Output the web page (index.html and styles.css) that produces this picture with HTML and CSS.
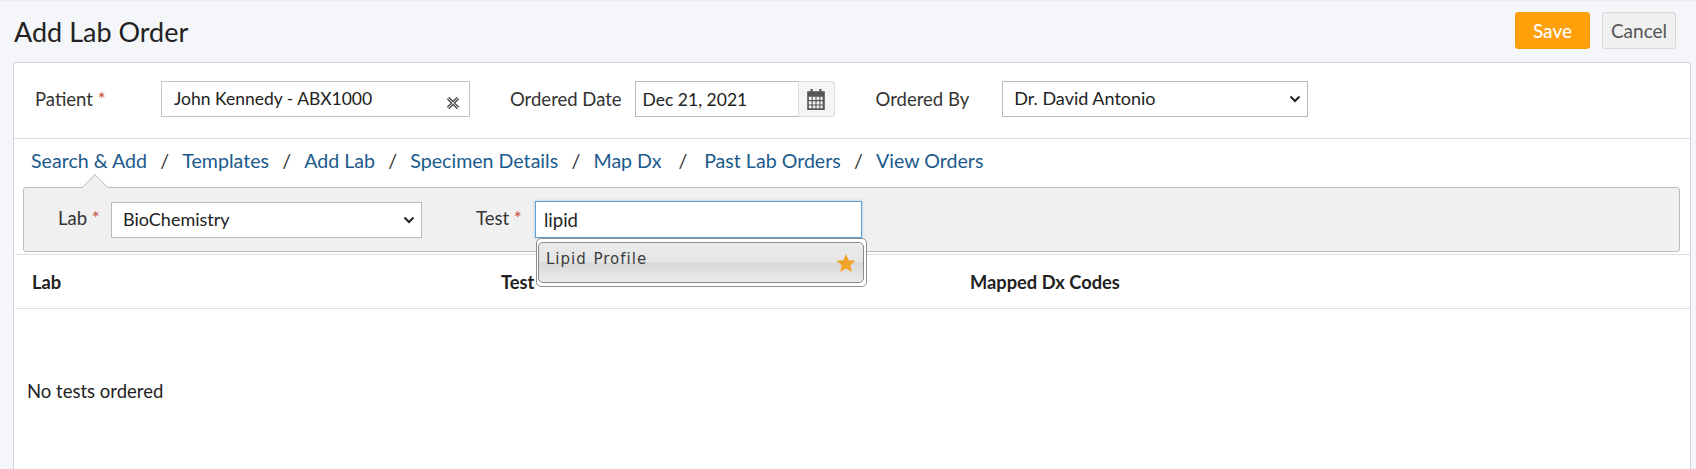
FILE: index.html
```html
<!DOCTYPE html>
<html lang="en">
<head>
<meta charset="utf-8">
<title>Add Lab Order</title>
<link rel="stylesheet" href="styles.css">
</head>
<body>
<header class="page-head">
  <h1 class="page-title">Add Lab Order</h1>
  <div class="actions">
    <button class="btn btn-save">Save</button>
    <button class="btn btn-cancel">Cancel</button>
  </div>
</header>
<main class="card">
  <section class="order-row">
    <label class="lbl lbl-patient">Patient <span class="req">*</span></label>
    <div class="patient-box">
      <span>John Kennedy - ABX1000</span>
      <svg class="clear-icon" viewBox="0 0 14 14" width="14" height="14"><path d="M2 2l10 10M12 2L2 12" stroke="#555" stroke-width="3.4" fill="none"/><path d="M2 2l10 10M12 2L2 12" stroke="#ddd" stroke-width="1" fill="none"/></svg>
    </div>
    <label class="lbl lbl-date">Ordered Date</label>
    <div class="date-group">
      <input class="date-input" value="Dec 21, 2021">
      <span class="date-btn">
        <svg viewBox="0 0 18 20" width="20" height="22"><path fill="#555" fill-rule="evenodd" d="M1 3h3V1h2v2h6V1h2v2h3v17H1zM2.500 8v3h2.500V8zm3.500 0v3h2.500V8zm3.500 0v3H12V8zm3.500 0v3h2V8zM2.500 12v3h2.500v-3zm3.500 0v3h2.500v-3zm3.500 0v3H12v-3zm3.500 0v3h2v-3zM2.500 16v2.500h2.500V16zm3.500 0v2.500h2.500V16zm3.500 0v2.500H12V16zm3.500 0v2.500h2V16z"/></svg>
      </span>
    </div>
    <label class="lbl lbl-by">Ordered By</label>
    <select class="field select-by"><option>Dr. David Antonio</option></select>
  </section>
  <nav class="tabs">
    <a class="tab">Search &amp; Add</a><span class="sep">/</span>
    <a class="tab">Templates</a><span class="sep">/</span>
    <a class="tab">Add Lab</a><span class="sep">/</span>
    <a class="tab">Specimen Details</a><span class="sep">/</span>
    <a class="tab">Map Dx</a><span class="sep sep-wide">/</span>
    <a class="tab">Past Lab Orders</a><span class="sep">/</span>
    <a class="tab">View Orders</a>
  </nav>
  <section class="search-panel">
    <span class="notch"></span>
    <label class="lbl lbl-lab">Lab <span class="req">*</span></label>
    <select class="field select-lab"><option>BioChemistry</option></select>
    <label class="lbl lbl-test">Test <span class="req">*</span></label>
    <div class="test-wrap">
      <input class="test-input" value="lipid">
      <div class="suggest">
        <div class="suggest-item">
          <span class="suggest-text">Lipid Profile</span>
          <svg class="star" viewBox="0 0 20 20" width="20" height="20"><path fill="#f0a52a" d="M10 1l2.700 6.200 6.800.6-5.100 4.500 1.500 6.600L10 15.400l-5.900 3.500 1.500-6.600L.5 7.800l6.800-.6z"/></svg>
        </div>
      </div>
    </div>
  </section>
  <section class="table-head">
    <div class="col col-lab">Lab</div>
    <div class="col col-test">Test</div>
    <div class="col">Mapped Dx Codes</div>
  </section>
  <p class="empty">No tests ordered</p>
</main>
</body>
</html>
```
FILE: styles.css
```css
* { box-sizing: border-box; }
html, body { height: 100%; }
body {
  margin: 0;
  height: 469px;
  overflow: hidden;
  background: #f4f6f9;
  border-top: 1px solid #eceef1;
  font-family: Lato, "Liberation Sans", sans-serif;
  font-size: 18.5px;
  color: #222;
}
.page-head {
  display: flex;
  justify-content: space-between;
  align-items: flex-start;
  height: 61px;
  padding: 11px 20px 0 14px;
}
.page-title {
  margin: 0;
  padding-top: 2px;
  font-size: 27px;
  line-height: 36px;
  font-weight: 400;
  color: #222;
}
.actions { display: flex; gap: 12px; }
.btn {
  height: 37px;
  border-radius: 3px;
  font-family: inherit;
  font-size: 19px;
  padding: 0;
}
.btn-save {
  width: 75px;
  background: #ff9f0a;
  border: 1px solid #f59a08;
  color: #fff;
  font-weight: 500;
}
.btn-cancel {
  width: 74px;
  background: #f0f0f0;
  border: 1px solid #d8d8d8;
  color: #555;
}
.card {
  margin: 0 5px 0 13px;
  height: 430px;
  background: #fff;
  border: 1px solid #cfd2d6;
  border-radius: 3px 3px 0 0;
}
.order-row {
  display: flex;
  align-items: center;
  height: 76px;
  padding-bottom: 3px;
  border-bottom: 1px solid #dcdfe2;
}
.lbl { color: #333; white-space: nowrap; }
.req { color: #c8523c; }
.lbl-patient { margin-left: 21px; width: 126px; }
.patient-box {
  position: relative;
  display: flex;
  align-items: center;
  width: 309px;
  height: 36px;
  padding: 0 0 2px 12px;
  border: 1px solid #c4c4c4;
  color: #222;
  font-size: 17.5px;
}
.clear-icon { position: absolute; right: 9px; top: 14px; }
.lbl-date { margin-left: 40px; }
.date-group { display: flex; margin-left: 13px; }
.date-input {
  width: 164px;
  height: 36px;
  padding: 0 7px;
  border: 1px solid #b9b9b9;
  font: inherit;
  font-size: 17.5px;
  color: #222;
  outline: 0;
}
.date-btn {
  display: flex;
  align-items: center;
  justify-content: center;
  width: 37px;
  height: 36px;
  margin-left: -1px;
  background: #f5f5f5;
  border: 1px solid #dcdcdc;
  border-radius: 0 3px 3px 0;
}
.lbl-by { margin-left: 41px; }
.field {
  appearance: none;
  height: 36px;
  border: 1px solid #b9b9b9;
  background: #fff url("data:image/svg+xml,%3Csvg xmlns='http://www.w3.org/2000/svg' width='12' height='8' viewBox='0 0 12 8'%3E%3Cpath d='M1.500 1.500 6 6l4.500-4.500' fill='none' stroke='%23222' stroke-width='2'/%3E%3C/svg%3E") no-repeat right 6px center;
  font: inherit;
  font-size: 18px;
  color: #222;
  padding: 0 0 2px 11px;
  border-radius: 0;
}
.select-by { width: 306px; margin-left: 33px; }
.tabs {
  display: flex;
  align-items: center;
  height: 48px;
  padding: 0 0 5px 17px;
  font-size: 19.6px;
}
.tab { color: #1b5a8c; white-space: nowrap; }
.sep { width: 35.3px; text-align: center; color: #333; }
.sep-wide { width: 42.7px; }
.search-panel {
  position: relative;
  display: flex;
  align-items: center;
  height: 65px;
  margin: 0 10px 0 9px;
  background: #f0f0f0;
  border: 1px solid #bcbcbc;
  border-radius: 3px;
}
.notch {
  position: absolute;
  left: 61px;
  top: -10px;
  width: 20px;
  height: 20px;
  background: #f0f0f0;
  border-left: 1px solid #bcbcbc;
  border-top: 1px solid #bcbcbc;
  transform: rotate(45deg);
  clip-path: polygon(0 0, 100% 0, 0 100%);
}
.lbl-lab { margin-left: 34px; width: 53px; margin-top: -3px; }
.select-lab { width: 311px; }
.lbl-test { margin-left: 54px; width: 59px; margin-top: -3px; }
.test-wrap { position: relative; }
.test-input {
  display: block;
  width: 327px;
  height: 37px;
  padding: 0 8px;
  border: 1px solid #5f9ed1;
  box-shadow: 0 0 3px rgba(95, 158, 209, .5);
  background: #fff;
  font: inherit;
  color: #222;
  outline: 0;
}
.suggest {
  position: absolute;
  left: 1px;
  top: 37px;
  width: 331px;
  height: 49px;
  padding: 3px 2px 3px 1px;
  background: #fff;
  border: 1px solid #8f8f8f;
  border-radius: 5px;
}
.suggest-item {
  position: relative;
  height: 41px;
  padding: 3px 0 0 7px;
  border: 1px solid #8a8a8a;
  border-radius: 5px;
  background: linear-gradient(#ebebeb 0, #e5e5e5 48%, #d9d9d9 52%, #ebebeb 100%);
}
.suggest-text {
  font-family: "DejaVu Sans", sans-serif;
  font-size: 15px;
  letter-spacing: 1px;
  word-spacing: 1px;
  color: #3c3c3c;
}
.star { position: absolute; right: 7px; top: 10px; }
.table-head {
  display: flex;
  align-items: center;
  height: 55px;
  margin: 2px 0 0 1px;
  border-top: 1px solid #dfdfdf;
  border-bottom: 1px solid #dfdfdf;
  font-size: 18.3px;
  font-weight: 700;
  color: #222;
}
.col-lab { width: 486px; padding-left: 17px; }
.col-test { width: 469px; }
.empty { margin: 71px 0 0 13px; color: #222; }
```
